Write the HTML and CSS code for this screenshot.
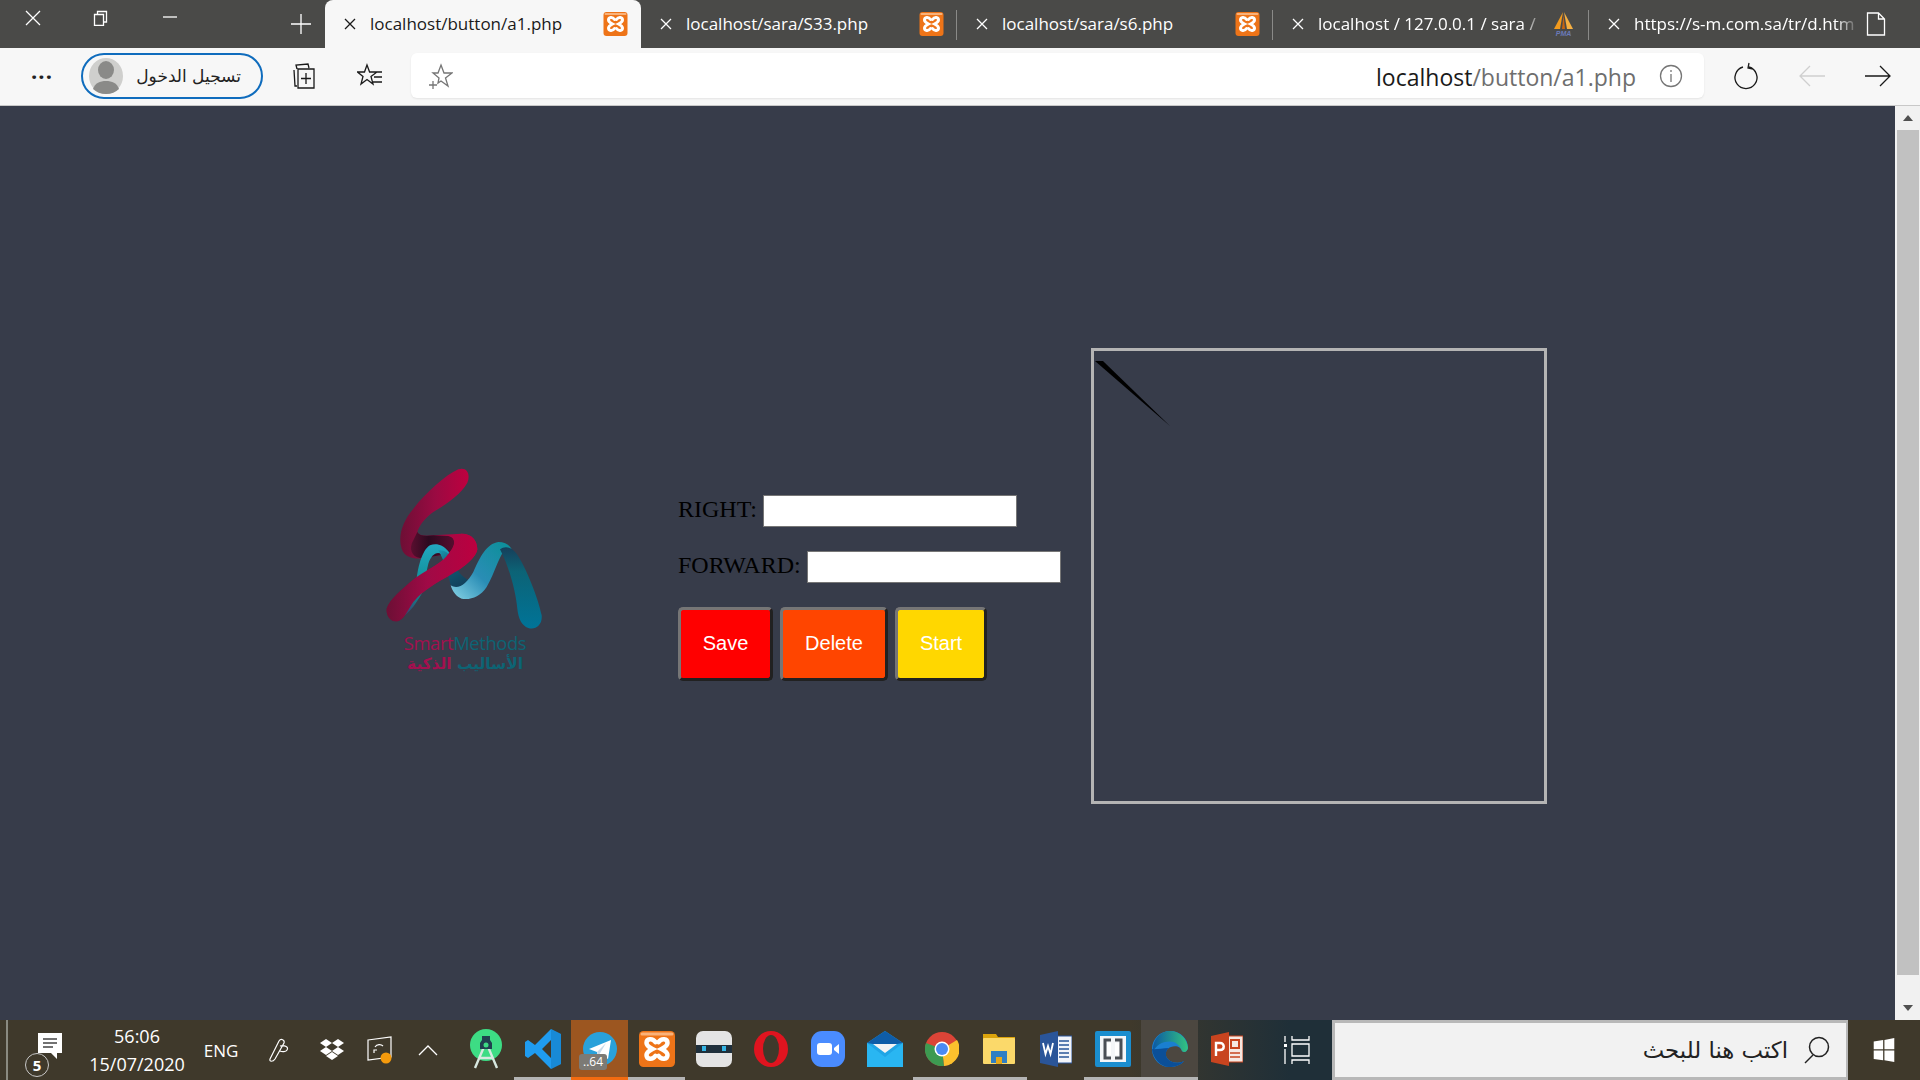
FILE: index.html
```html
<!DOCTYPE html>
<html lang="en">
<head>
    <meta charset="UTF-8">
    <meta name="viewport" content="width=device-width, initial-scale=1.0">
    <title>localhost/button/a1.php</title>
    <link rel="stylesheet" href="styles.css">
</head>
<body>
    <svg class="sprites" aria-hidden="true">
        <defs>
            <linearGradient id="redUpper" gradientUnits="userSpaceOnUse" x1="60" y1="0" x2="270" y2="0">
                <stop offset="0" stop-color="#6d0f35"/>
                <stop offset="0.5" stop-color="#9a0a42"/>
                <stop offset="1" stop-color="#c0003f"/>
            </linearGradient>
            <linearGradient id="redLower" gradientUnits="userSpaceOnUse" x1="20" y1="0" x2="292" y2="0">
                <stop offset="0" stop-color="#6d0f35"/>
                <stop offset="0.45" stop-color="#a00a46"/>
                <stop offset="1" stop-color="#bc003f"/>
            </linearGradient>
            <linearGradient id="foldDark" gradientUnits="userSpaceOnUse" x1="90" y1="0" x2="230" y2="0">
                <stop offset="0" stop-color="#5c0f30"/>
                <stop offset="0.4" stop-color="#2c0a20"/>
                <stop offset="1" stop-color="#5a0e30"/>
            </linearGradient>
            <linearGradient id="tealLeg" gradientUnits="userSpaceOnUse" x1="0" y1="250" x2="0" y2="475">
                <stop offset="0" stop-color="#22a6c0"/>
                <stop offset="0.65" stop-color="#0a8a8c"/>
                <stop offset="1" stop-color="#4a2a6a"/>
            </linearGradient>
            <linearGradient id="tealDrop" gradientUnits="userSpaceOnUse" x1="180" y1="265" x2="250" y2="375">
                <stop offset="0" stop-color="#1a95ad"/>
                <stop offset="0.5" stop-color="#12566e"/>
                <stop offset="1" stop-color="#123f5a"/>
            </linearGradient>
            <linearGradient id="lightRibbon" gradientUnits="userSpaceOnUse" x1="220" y1="400" x2="370" y2="250">
                <stop offset="0" stop-color="#7ccbe0"/>
                <stop offset="0.45" stop-color="#2a8db5"/>
                <stop offset="1" stop-color="#0f8f9c"/>
            </linearGradient>
            <linearGradient id="tealRight" gradientUnits="userSpaceOnUse" x1="0" y1="255" x2="0" y2="500">
                <stop offset="0" stop-color="#163e5a"/>
                <stop offset="0.3" stop-color="#0c6376"/>
                <stop offset="1" stop-color="#007498"/>
            </linearGradient>
            <linearGradient id="edgeWave" x1="0" y1="0" x2="1" y2="0">
                <stop offset="0" stop-color="#0c59a4"/>
                <stop offset="1" stop-color="#33c481"/>
            </linearGradient>
            <symbol id="xampp" viewBox="0 0 24 24">
                <rect width="24" height="24" rx="3" fill="#ee7418"/>
                <rect x="1" y="1" width="22" height="2" rx="1" fill="#f9b27a"/>
                <path d="M11 7.500C9 4.500 5 5 5 8c0 2 2 3 4 4-2 1-4 2-4 4 0 3 4 3.500 6 .5M13 7.500C15 4.500 19 5 19 8c0 2-2 3-4 4 2 1 4 2 4 4 0 3-4 3.500-6 .5" fill="none" stroke="#fff" stroke-width="3" stroke-linecap="round"/>
            </symbol>
        </defs>
    </svg>

    <div class="tabbar">
        <div class="window-btn">
            <svg width="16" height="16" viewBox="0 0 16 16"><path d="M1 1l14 14M15 1L1 15" class="line-white"/></svg>
        </div>
        <div class="window-btn">
            <svg width="16" height="16" viewBox="0 0 16 16"><path d="M1.500 4.500h9v11h-9zM4.500 4.500v-3h9v10.500h-3" class="line-white"/></svg>
        </div>
        <div class="window-btn">
            <svg width="16" height="16" viewBox="0 0 16 16"><path d="M1 7h14" class="line-white"/></svg>
        </div>
        <div class="new-tab">
            <svg width="22" height="22" viewBox="0 0 22 22"><path d="M11 1v20M1 11h20" class="line-white"/></svg>
        </div>

        <div class="tab tab-active">
            <svg class="tab-close" width="12" height="12" viewBox="0 0 12 12"><path d="M1 1l10 10M11 1L1 11" class="line-dark"/></svg>
            <span class="tab-title">localhost/button/a1.php</span>
            <svg class="tab-icon" width="25" height="24"><use href="#xampp"/></svg>
        </div>
        <div class="tab tab-split">
            <svg class="tab-close" width="12" height="12" viewBox="0 0 12 12"><path d="M1 1l10 10M11 1L1 11" class="line-white"/></svg>
            <span class="tab-title">localhost/sara/S33.php</span>
            <svg class="tab-icon" width="25" height="24"><use href="#xampp"/></svg>
        </div>
        <div class="tab tab-split">
            <svg class="tab-close" width="12" height="12" viewBox="0 0 12 12"><path d="M1 1l10 10M11 1L1 11" class="line-white"/></svg>
            <span class="tab-title">localhost/sara/s6.php</span>
            <svg class="tab-icon" width="25" height="24"><use href="#xampp"/></svg>
        </div>
        <div class="tab tab-split">
            <svg class="tab-close" width="12" height="12" viewBox="0 0 12 12"><path d="M1 1l10 10M11 1L1 11" class="line-white"/></svg>
            <span class="tab-title tab-fade">localhost / 127.0.0.1 / sara /</span>
            <svg class="tab-icon" width="25" height="24" viewBox="0 0 25 24">
                <path d="M12 0L3 17h6z" fill="#f29a1d"/>
                <path d="M13 0l9 17h-6z" fill="#f6b042"/>
                <path d="M12.500 3l-1.500 14h3z" fill="#c8640e"/>
                <text x="12.500" y="23.500" class="pma-text">PMA</text>
            </svg>
        </div>
        <div class="tab tab-last">
            <svg class="tab-close" width="12" height="12" viewBox="0 0 12 12"><path d="M1 1l10 10M11 1L1 11" class="line-white"/></svg>
            <span class="tab-title tab-fade">https://s-m.com.sa/tr/d.htm</span>
            <svg class="tab-icon" width="22" height="24" viewBox="0 0 22 24"><path d="M2.500 1h11l6 6v16h-17zM13.500 1v6h6" class="line-white"/></svg>
        </div>
    </div>

    <div class="toolbar">
        <div class="more-btn">&middot;&middot;&middot;</div>
        <div class="profile-pill">
            <svg class="avatar" width="34" height="36" viewBox="0 0 34 36">
                <ellipse cx="17" cy="18" rx="17" ry="18" fill="#cfcfcd"/>
                <ellipse cx="17" cy="12" rx="8" ry="9" fill="#8a8a88"/>
                <path d="M4 31c2-6 7-8 13-8s11 2 13 8c-3 3-8 5-13 5S7 34 4 31z" fill="#8a8a88"/>
            </svg>
            <span class="profile-name" dir="rtl">تسجيل الدخول</span>
        </div>
        <div class="tool-btn">
            <svg width="26" height="26" viewBox="0 0 26 26"><path d="M6 6L5 2l12-1 1 4M3 7l1 16h2M7 6h16v19H7zM15 10v11M10 15.500h10" class="line-dark"/></svg>
        </div>
        <div class="tool-btn">
            <svg width="26" height="26" viewBox="0 0 26 26"><path d="M10 2l2.600 7H20l-6 4.500 2 7.500-6-4.500L4 21l2-7.500L0.500 9H7.500zM16 9h9M17 14h8M16 19h9" class="line-dark"/></svg>
        </div>
        <div class="address-bar">
            <svg class="address-star" width="26" height="26" viewBox="0 0 26 26"><path d="M14 2l3 8h8l-6.500 5 2.500 8-7-5-3 2 1-5L6 10h5zM2 22h8M6 18v8" class="line-grey"/></svg>
            <span class="url"><span class="url-host">localhost</span>/button/a1.php</span>
            <svg class="address-info" width="24" height="24" viewBox="0 0 24 24"><circle cx="12" cy="12" r="10.500" class="line-grey"/><path d="M12 10v8M12 6v2" class="line-grey"/></svg>
        </div>
        <div class="nav-btn nav-first">
            <svg width="28" height="28" viewBox="0 0 28 28"><path d="M11 5a11 11 0 1 0 6 0M17 1l-1 5 5 1" class="line-dark"/></svg>
        </div>
        <div class="nav-btn">
            <svg width="28" height="24" viewBox="0 0 28 24"><path d="M27 12H2M12 2L2 12l10 10" class="line-light"/></svg>
        </div>
        <div class="nav-btn">
            <svg width="28" height="24" viewBox="0 0 28 24"><path d="M1 12h25M16 2l10 10-10 10" class="line-dark"/></svg>
        </div>
    </div>

    <div class="viewport">
        <main class="page">
            <div class="logo">
                <svg width="170" height="170" viewBox="0 0 510 510">
                    <path d="M235 22C262 14 272 38 262 62C245 95 195 130 160 150C135 168 118 190 112 210C118 222 135 222 160 220L245 215C275 215 292 235 292 262C288 290 245 320 210 340C170 362 130 385 100 420C85 440 75 470 55 477C35 482 18 465 20 440C28 415 60 385 110 345C150 318 190 300 205 275L150 285C110 295 75 290 65 260C52 220 70 175 100 140C140 90 195 40 235 22Z" fill="url(#redUpper)"/>
                    <path d="M112 210C118 222 135 222 160 220L205 222C225 225 232 250 205 275L150 285L120 288C95 285 85 260 100 235Z" fill="url(#foldDark)"/>
                    <path d="M50 472C90 440 105 400 108 370C112 320 125 265 150 250C170 242 190 250 205 268L215 285L195 285C175 262 155 275 145 305C135 345 135 375 125 395C105 430 80 465 50 472Z" fill="url(#tealLeg)"/>
                    <path d="M175 265C190 262 205 270 215 290C225 320 245 345 268 355L240 385L212 370C205 340 195 300 175 265Z" fill="url(#tealDrop)"/>
                    <path d="M212 370C235 385 260 365 280 330C300 285 320 245 355 240C375 240 390 250 395 262L370 270C355 290 345 330 320 375C300 405 270 415 245 410C230 405 218 390 212 370Z" fill="url(#lightRibbon)"/>
                    <path d="M360 262C375 250 395 255 410 275C440 320 475 410 485 460C488 490 465 505 445 498C425 490 415 470 412 440C408 395 390 320 360 262Z" fill="url(#tealRight)"/>
                    <path d="M245 215C275 215 292 235 292 262C288 290 245 320 210 340C170 362 130 385 100 420C85 440 75 470 55 477C35 482 18 465 20 440C28 415 60 385 110 345C150 318 190 300 205 275C225 255 232 225 205 222Z" fill="url(#redLower)"/>
                </svg>
                <div class="logo-en"><span class="logo-pink">Smart</span><span class="logo-teal">Methods</span></div>
                <div class="logo-ar" dir="rtl"><span class="logo-teal">الأساليب</span> <span class="logo-pink">الذكية</span></div>
            </div>

            <form class="robot-form">
                <div class="form-row">
                    <label for="right" class="form-label">RIGHT:</label>
                    <input type="text" id="right" name="right" class="form-input">
                </div>
                <div class="form-row">
                    <label for="forward" class="form-label">FORWARD:</label>
                    <input type="text" id="forward" name="forward" class="form-input">
                </div>
                <div class="form-buttons">
                    <button type="button" class="action-btn btn-save">Save</button>
                    <button type="button" class="action-btn btn-delete">Delete</button>
                    <button type="button" class="action-btn btn-start">Start</button>
                </div>
            </form>

            <div class="draw-box">
                <svg width="450" height="450" viewBox="0 0 450 450"><path d="M0 0h8l67 65z" fill="#000"/></svg>
            </div>
        </main>
        <div class="scrollbar">
            <div class="scroll-arrow scroll-up"></div>
            <div class="scroll-track"><div class="scroll-thumb"></div></div>
            <div class="scroll-arrow scroll-down"></div>
        </div>
    </div>

    <div class="taskbar">
        <div class="tray-notify">
            <svg width="24" height="28" viewBox="0 0 24 28"><path d="M0 0h24v20h-5v6l-6-6H0z" fill="#fff"/><path d="M5 6h14M5 10h14M5 14h10" stroke="#444" stroke-width="1.300"/></svg>
            <span class="notify-badge">5</span>
        </div>
        <div class="tray-clock"><span>56:06</span><span>15/07/2020</span></div>
        <div class="tray-lang">ENG</div>
        <div class="tray-item tray-pen">
            <svg width="22" height="26" viewBox="0 0 22 26"><path d="M2 22l9-18c2-3 6-1 5 2l-9 16c-2 3-6 3-5 0zM12 9c5-1 9 1 7 4-1 2-5 2-7 1" fill="none" stroke="#fff" stroke-width="1.200"/></svg>
        </div>
        <div class="tray-item tray-dropbox">
            <svg width="24" height="24" viewBox="0 0 24 22"><path d="M6 0l6 4-6 4-6-4zM18 0l6 4-6 4-6-4zM6 8l6 4-6 4-6-4zM18 8l6 4-6 4-6-4zM12 13l6 4-6 4-6-4z" fill="#fff"/></svg>
        </div>
        <div class="tray-item tray-sync">
            <svg width="26" height="28" viewBox="0 0 26 28">
                <path d="M1 4l23-3v20l-23 3z" fill="none" stroke="#fff" stroke-width="1.200"/>
                <path d="M8 11c2-3 6-3 8-1M7 17v-3h3" fill="none" stroke="#fff" stroke-width="1.200"/>
                <circle cx="19" cy="22" r="5.500" fill="#f59a0c"/>
            </svg>
        </div>
        <div class="tray-item tray-chevron">
            <svg width="20" height="12" viewBox="0 0 20 12"><path d="M1 11l9-9 9 9" fill="none" stroke="#fff" stroke-width="1.300"/></svg>
        </div>

        <div class="apps">
            <div class="app">
                <svg width="36" height="42" viewBox="0 0 36 42">
                    <circle cx="18" cy="17" r="16" fill="#3ddc84"/>
                    <path d="M7 40L18 14l11 26M11 30h14" fill="none" stroke="#d8e8e0" stroke-width="2.400"/>
                    <path d="M14 8h8v4l2 3v6h-12v-6l2-3z" fill="#20414f"/>
                    <circle cx="18" cy="17" r="2.500" fill="#3ddc84"/>
                </svg>
            </div>
            <div class="app app-open">
                <svg width="36" height="40" viewBox="0 0 36 40">
                    <path d="M26 0l10 5v30l-10 5-16-16-7 5-3-2V13l3-2 7 5zM26 11l-9 9 9 9z" fill="#1f9cf0"/>
                    <path d="M26 0l10 5v30l-10 5z" fill="#1177bb" opacity="0.500"/>
                </svg>
            </div>
            <div class="app app-running">
                <svg width="34" height="34" viewBox="0 0 34 34">
                    <circle cx="17" cy="17" r="17" fill="#2aa1da"/>
                    <path d="M6 17l22-9-3 19-7-5-3 4-1-6z" fill="#fff"/>
                    <path d="M14 20l9-9-7 12z" fill="#c8daea"/>
                </svg>
                <span class="app-count">..64</span>
            </div>
            <div class="app app-open">
                <svg width="36" height="36"><use href="#xampp"/></svg>
            </div>
            <div class="app">
                <svg width="36" height="36" viewBox="0 0 36 36">
                    <rect width="36" height="36" rx="7" fill="#e4e4e4"/>
                    <rect y="14" width="36" height="8" fill="#20303c"/>
                    <rect x="6" y="15" width="4" height="5" fill="#35b5e5"/>
                    <rect x="26" y="15" width="4" height="5" fill="#35b5e5"/>
                </svg>
            </div>
            <div class="app">
                <svg width="34" height="36" viewBox="0 0 34 36">
                    <ellipse cx="17" cy="18" rx="17" ry="18" fill="#e0141f"/>
                    <ellipse cx="17" cy="18" rx="8" ry="14" fill="#3f392b"/>
                </svg>
            </div>
            <div class="app">
                <svg width="34" height="36" viewBox="0 0 34 36">
                    <rect width="34" height="36" rx="11" fill="#4a8cff"/>
                    <rect x="6" y="12" width="15" height="12" rx="3" fill="#fff"/>
                    <path d="M23 17l5-4v10l-5-4z" fill="#fff"/>
                </svg>
            </div>
            <div class="app">
                <svg width="36" height="36" viewBox="0 0 36 36">
                    <path d="M0 12L18 0l18 12v24H0z" fill="#1fa5e6"/>
                    <path d="M0 12L18 0l18 12-18 3z" fill="#0f5da8"/>
                    <path d="M6 13h24l-12 9z" fill="#f4f4f4"/>
                    <path d="M0 12l18 14 18-14v24H0z" fill="#29b6f2"/>
                </svg>
            </div>
            <div class="app app-open">
                <svg width="34" height="34" viewBox="0 0 34 34">
                    <circle cx="17" cy="17" r="17" fill="#db4437"/>
                    <path d="M17 17L32 8a17 17 0 0 1-13 26z" fill="#fbc02d"/>
                    <path d="M17 17L19 34A17 17 0 0 1 1 11z" fill="#3d9a51"/>
                    <circle cx="17" cy="17" r="7.500" fill="#fff"/>
                    <circle cx="17" cy="17" r="6" fill="#4a8af4"/>
                </svg>
            </div>
            <div class="app app-open">
                <svg width="32" height="34" viewBox="0 0 32 34">
                    <path d="M0 2h13l2 3h17v5H0z" fill="#dca40c"/>
                    <rect y="6" width="32" height="26" rx="1" fill="#fbd96a"/>
                    <path d="M8 31V19h16v12h-5v-6h-6v6z" fill="#2f7fc4"/>
                    <rect x="13" y="25" width="6" height="7" fill="#e6a91a"/>
                </svg>
            </div>
            <div class="app">
                <svg width="32" height="36" viewBox="0 0 32 36">
                    <rect x="14" y="5" width="18" height="27" fill="#f2f4fa" stroke="#2a5599"/>
                    <path d="M19 10h10M19 14h10M19 18h10M19 22h10M19 26h10" stroke="#2a5599" stroke-width="1.500"/>
                    <path d="M0 4l18-4v36L0 32z" fill="#2a5599"/>
                    <path d="M3 12l2.500 11 2.500-8 2.500 8L13 12" fill="none" stroke="#fff" stroke-width="1.800"/>
                </svg>
            </div>
            <div class="app app-open">
                <svg width="36" height="36" viewBox="0 0 36 36">
                    <rect width="36" height="36" rx="2" fill="#1a8ecf"/>
                    <rect x="5" y="5" width="26" height="26" fill="#f4f6f8"/>
                    <path d="M16 9h-6v18h6M20 9h6v18h-6" fill="none" stroke="#4a4f55" stroke-width="3"/>
                    <rect x="12" y="12" width="4" height="12" fill="#fff"/>
                    <rect x="20" y="12" width="4" height="12" fill="#fff"/>
                </svg>
            </div>
            <div class="app app-open app-focus">
                <svg width="36" height="36" viewBox="0 0 36 36">
                    <path d="M18 0C8 0 0 8 0 18c0 11 9 18 17 18 6 0 12-2 15-6-5 3-14 2-17-3-3-5 0-10 4-11 5-2 10 0 11 4 2 2 5 1 6-3C36 8 29 0 18 0z" fill="#1a7fd0"/>
                    <path d="M18 0C26 0 35 6 36 17c-1 4-4 5-6 3-3-8-9-11-17-9C8 12 3 16 1 21 0 9 8 0 18 0z" fill="url(#edgeWave)"/>
                    <path d="M0 18c1 10 9 18 17 18 6 0 12-2 15-6-5 3-14 2-17-3-2-4-1-8 2-10-7 0-14 2-17 1z" fill="#0b4f98"/>
                </svg>
            </div>
            <div class="app">
                <svg width="32" height="34" viewBox="0 0 32 34">
                    <rect x="14" y="4" width="18" height="26" fill="#f6e8e2" stroke="#c8441f"/>
                    <path d="M20 8h8v8h-8z" fill="none" stroke="#c8441f" stroke-width="2"/>
                    <path d="M19 21h10M19 25h10" stroke="#c8441f" stroke-width="1.500"/>
                    <path d="M0 4l18-4v34L0 30z" fill="#c8441f"/>
                    <path d="M5 24V11h4c5 0 5 7 0 7H5" fill="none" stroke="#fff" stroke-width="2.400"/>
                </svg>
            </div>
        </div>

        <div class="task-view">
            <svg width="26" height="30" viewBox="0 0 26 30"><path d="M8 1v4h17V1M8 9h17v12H8zM8 29v-4h17v4M1 1v6M1 14v15" fill="none" stroke="#fff" stroke-width="1.300"/><rect x="0" y="9" width="3" height="3" fill="#fff"/></svg>
        </div>

        <div class="search-box">
            <svg width="26" height="28" viewBox="0 0 26 28"><circle cx="15" cy="11" r="9.500" fill="none" stroke="#222" stroke-width="1.500"/><path d="M9 19L1 27" stroke="#222" stroke-width="1.500"/></svg>
            <span class="search-text" dir="rtl">اكتب هنا للبحث</span>
        </div>

        <div class="start-btn">
            <svg width="24" height="24" viewBox="0 0 24 28"><path d="M0 4l11-1.600V13H0zM12.500 2.200L24 0v13H12.500zM0 14.500h11V26L0 24.400zM12.500 14.500H24V28l-11.500-2z" fill="#fff"/></svg>
        </div>
    </div>
</body>
</html>
```

FILE: styles.css
```css
/* browser window */
html, body {
    height: 100%;
}
body {
    margin: 0;
    height: 100vh;
    overflow: hidden;
    display: flex;
    flex-direction: column;
    font-family: "Open Sans", "DejaVu Sans", sans-serif;
    background-color: #373c4a;
}
.sprites {
    display: block;
    width: 0;
    height: 0;
    flex: none;
}
.line-white,
.line-dark,
.line-grey,
.line-light {
    fill: none;
    stroke-width: 1.300;
}
.line-white { stroke: #fff; }
.line-dark { stroke: #1a1a1a; }
.line-grey { stroke: #767676; }
.line-light { stroke: #cfcfcf; }

/* tab strip */
.tabbar {
    flex: none;
    height: 48px;
    display: flex;
    background-color: #4a4a48;
    color: #fff;
}
.window-btn {
    width: 69px;
    height: 36px;
    display: flex;
    align-items: center;
    justify-content: center;
}
.window-btn:first-child {
    width: 66px;
}
.new-tab {
    flex: none;
    width: 121px;
    box-sizing: border-box;
    padding-left: 72px;
    display: flex;
    align-items: center;
    justify-content: center;
}
.tab {
    flex: none;
    width: 316px;
    height: 48px;
    box-sizing: border-box;
    display: flex;
    align-items: center;
    padding: 0 13px 0 19px;
    position: relative;
}
.tab-active {
    background-color: #f7f7f7;
    color: #1a1a1a;
    border-radius: 8px 8px 0 0;
}
.tab-split::after {
    content: "";
    position: absolute;
    right: 0;
    top: 10px;
    height: 30px;
    width: 1px;
    background-color: #8a8a88;
}
.tab-last {
    width: 328px;
    padding-right: 30px;
}
.tab-close {
    flex: none;
    margin-right: 14px;
}
.tab-title {
    flex: 1;
    min-width: 0;
    overflow: hidden;
    white-space: nowrap;
    font-size: 17px;
    line-height: 48px;
}
.tab-fade {
    -webkit-mask-image: linear-gradient(to right, #000 90%, transparent 100%);
    mask-image: linear-gradient(to right, #000 90%, transparent 100%);
}
.tab-icon {
    flex: none;
    margin-left: 6px;
}
.pma-text {
    font-family: "Liberation Sans", sans-serif;
    font-size: 7px;
    font-weight: bold;
    font-style: italic;
    fill: #6a7ab8;
    text-anchor: middle;
}

/* toolbar */
.toolbar {
    flex: none;
    height: 58px;
    box-sizing: border-box;
    display: flex;
    align-items: center;
    padding-left: 22px;
    background-color: #f7f7f7;
    border-bottom: 1px solid #c8c8c8;
    padding-bottom: 2px;
}
.more-btn {
    width: 40px;
    margin-right: 19px;
    font-size: 22px;
    font-weight: bold;
    text-align: center;
    color: #222;
    letter-spacing: 1px;
}
.profile-pill {
    width: 182px;
    height: 46px;
    box-sizing: border-box;
    display: flex;
    align-items: center;
    padding: 0 20px 0 6px;
    border: 2px solid #0f6cbd;
    border-radius: 23px;
}
.avatar {
    flex: none;
}
.profile-name {
    flex: 1;
    font-family: "DejaVu Sans", sans-serif;
    font-size: 17px;
    color: #222;
    white-space: nowrap;
}
.tool-btn {
    width: 66px;
    display: flex;
    justify-content: center;
}
.tool-btn:nth-of-type(3) {
    margin-left: 8px;
}
.address-bar {
    width: 1293px;
    height: 45px;
    margin-left: 8px;
    box-sizing: border-box;
    display: flex;
    align-items: center;
    padding: 0 21px 0 16px;
    background-color: #fff;
    border-radius: 6px;
    box-shadow: 0 1px 2px rgba(0, 0, 0, 0.08);
}
.url {
    flex: 1;
    text-align: right;
    font-size: 23px;
    line-height: 30px;
    padding-top: 2px;
    color: #6e6e6e;
    padding-right: 23px;
    white-space: nowrap;
}
.url-host {
    color: #1a1a1a;
}
.address-info,
.address-star {
    flex: none;
}
.nav-btn {
    width: 66px;
    display: flex;
    justify-content: center;
}
.nav-first {
    margin-left: 9px;
}

/* page */
.viewport {
    flex: 1;
    min-height: 0;
    display: flex;
}
.page {
    flex: 1;
    display: flex;
    align-items: flex-start;
    padding: 242px 0 0 380px;
}
.logo {
    flex: none;
    width: 170px;
    margin-top: 114px;
    margin-right: 128px;
    text-align: center;
}
.logo svg {
    display: block;
}
.logo-en {
    font-size: 18.400px;
    line-height: 22px;
    white-space: nowrap;
    letter-spacing: -0.400px;
}
.logo-ar {
    font-family: "DejaVu Sans", sans-serif;
    font-size: 15.400px;
    font-weight: bold;
    line-height: 20px;
    white-space: nowrap;
}
.logo-pink { color: #a3104f; }
.logo-teal { color: #0d6474; }

.robot-form {
    flex: none;
    width: 413px;
    margin-top: 147px;
}
.form-row {
    display: flex;
    align-items: center;
    height: 32px;
    margin-bottom: 24px;
}
.form-label {
    font-family: "Liberation Serif", serif;
    font-size: 24px;
    color: #000;
    margin-right: 6px;
    margin-bottom: 4px;
    white-space: nowrap;
}
.form-input {
    width: 254px;
    height: 32px;
    box-sizing: border-box;
    border: 1px solid #767676;
    background-color: #fff;
    padding: 0;
}
.form-buttons {
    display: flex;
    gap: 7px;
}
.action-btn {
    height: 74px;
    box-sizing: border-box;
    border: 3px outset #767676;
    border-radius: 5px;
    font-family: "Liberation Sans", sans-serif;
    font-size: 20px;
    color: #fff;
    padding: 0 0 2px;
}
.btn-save {
    width: 95px;
    background-color: #f00;
}
.btn-delete {
    width: 108px;
    background-color: #ff4500;
}
.btn-start {
    width: 92px;
    background-color: #ffd700;
}
.draw-box {
    flex: none;
    width: 456px;
    height: 456px;
    box-sizing: border-box;
    border: 3px solid #b4b4b4;
}
.draw-box svg {
    display: block;
    margin: 10px 0 0 1px;
}

/* scrollbar */
.scrollbar {
    flex: none;
    width: 25px;
    display: flex;
    flex-direction: column;
    background-color: #f1f1f1;
}
.scroll-arrow {
    flex: none;
    height: 24px;
    display: flex;
    align-items: center;
    justify-content: center;
}
.scroll-arrow::before {
    content: "";
    border-left: 5px solid transparent;
    border-right: 5px solid transparent;
}
.scroll-up::before {
    border-bottom: 6px solid #505050;
}
.scroll-down::before {
    border-top: 6px solid #505050;
}
.scroll-track {
    flex: 1;
    padding: 0 1px 0 2px;
    display: flex;
    align-items: flex-start;
}
.scroll-thumb {
    width: 100%;
    height: 845px;
    background-color: #c1c1c1;
}

/* taskbar */
.taskbar {
    flex: none;
    height: 60px;
    display: flex;
    align-items: stretch;
    color: #fff;
    background: linear-gradient(to right, #3f392b 0, #3f392b 1130px, #1f2f38 1290px);
}
.tray-notify {
    width: 72px;
    margin-left: 6px;
    box-sizing: border-box;
    border-left: 2px solid #8a8a80;
    padding-left: 12px;
    display: flex;
    align-items: center;
    justify-content: center;
    position: relative;
}
.tray-notify svg {
    margin-left: 2px;
    margin-bottom: 6px;
}
.notify-badge {
    position: absolute;
    left: 17px;
    bottom: 3px;
    width: 24px;
    height: 24px;
    border: 1px solid #c8c8c8;
    border-radius: 50%;
    box-sizing: border-box;
    background-color: #3f392b;
    font-size: 15px;
    font-weight: bold;
    line-height: 22px;
    text-align: center;
}
.tray-clock {
    width: 118px;
    display: flex;
    flex-direction: column;
    align-items: center;
    justify-content: center;
    gap: 4px;
    font-size: 18px;
    line-height: 24px;
}
.tray-lang {
    width: 50px;
    display: flex;
    align-items: center;
    justify-content: center;
    font-size: 17px;
}
.tray-item {
    display: flex;
    align-items: center;
    justify-content: center;
}
.tray-pen { width: 66px; }
.tray-dropbox { width: 40px; }
.tray-sync { width: 56px; }
.tray-chevron { width: 40px; margin-right: 9px; }
.apps {
    display: flex;
}
.app {
    width: 57px;
    box-sizing: border-box;
    display: flex;
    align-items: center;
    justify-content: center;
    padding-bottom: 3px;
    position: relative;
}
.app-open {
    border-bottom: 3px solid #b4b4b4;
    padding-bottom: 0;
}
.app-running {
    background-color: #9c5620;
    border-bottom: 3px solid #f36b10;
    padding-bottom: 0;
}
.app-focus {
    background-color: #4c4740;
}
.app-count {
    position: absolute;
    left: 8px;
    bottom: 7px;
    padding: 0 4px;
    border-radius: 3px;
    background-color: #7c7a75;
    font-size: 12px;
    line-height: 16px;
}
.task-view {
    width: 77px;
    box-sizing: border-box;
    display: flex;
    align-items: center;
    justify-content: flex-end;
    padding-right: 22px;
}
.search-box {
    width: 516px;
    box-sizing: border-box;
    border: 3px solid #b8b8b8;
    border-right-width: 2px;
    border-left-width: 3px;
    background-color: #f2f2f2;
    color: #222;
    display: flex;
    flex-direction: row-reverse;
    align-items: center;
    padding-right: 16px;
}
.search-text {
    margin-right: 16px;
    font-family: "DejaVu Sans", sans-serif;
    font-size: 22.800px;
    white-space: nowrap;
}
.start-btn {
    width: 72px;
    display: flex;
    align-items: center;
    justify-content: center;
    background-color: #3f392b;
}
```
